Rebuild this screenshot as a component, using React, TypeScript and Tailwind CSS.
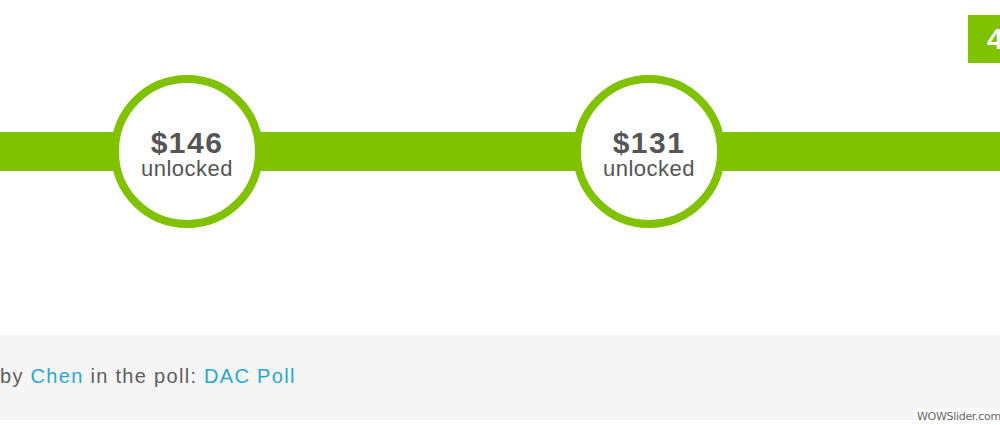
import React from 'react';

const Milestone: React.FC<{ amount: string }> = ({ amount }) => {
  return (
    <div className='relative z-10 -mx-[14px] flex flex-col items-center justify-center shrink-0 w-[152px] h-[153px] rounded-full border-8 border-[#80c100] bg-white text-[#555]'>
      <span className='block text-[30px] font-bold leading-[30px] tracking-[1.5px] mt-[4px]'>{amount}</span>
      <span className='block text-[22px] leading-[22px] tracking-[0.5px]'>unlocked</span>
    </div>
  );
};

const App: React.FC = () => {
  return (
    <main className='relative w-[1000px] h-[425px] overflow-hidden bg-white font-["Liberation_Sans",Arial,sans-serif]'>
      {/* Timeline */}
      <section className='flex flex-col h-[335px]'>
        <div className='flex justify-end pt-[15px] h-[75px]'>
          <div className='shrink-0 w-[60px] h-[48px] -mr-[28px] pl-[19px] bg-[#80c100] text-white text-[30px] font-bold leading-[48px]'>4</div>
        </div>
        <div className='flex items-center h-[153px]'>
          <div className='shrink-0 w-[125px] h-[39px] bg-[#80c100]' />
          <Milestone amount='$146' />
          <div className='shrink-0 w-[338px] h-[39px] bg-[#80c100]' />
          <Milestone amount='$131' />
          <div className='flex-1 h-[39px] bg-[#80c100]' />
        </div>
      </section>

      {/* Poll info */}
      <section className='flex items-center h-[85px] bg-[#f5f5f5] text-[20px] tracking-[1.3px] text-[#5e5e5e]'>
        <p className='-mt-[3px]'>
          by <a className='text-[#2ba6d2]'>Chen</a> in the poll: <a className='text-[#2ba6d2]'>DAC Poll</a>
        </p>
      </section>

      <div className='absolute bottom-0 right-0 w-[87px] h-[17px] bg-white pl-[4px] text-[11px] leading-[17px] text-[#666] font-["DejaVu_Sans",sans-serif] tracking-[-0.3px]'>
        WOWSlider.com
      </div>
    </main>
  );
};

export default App;
